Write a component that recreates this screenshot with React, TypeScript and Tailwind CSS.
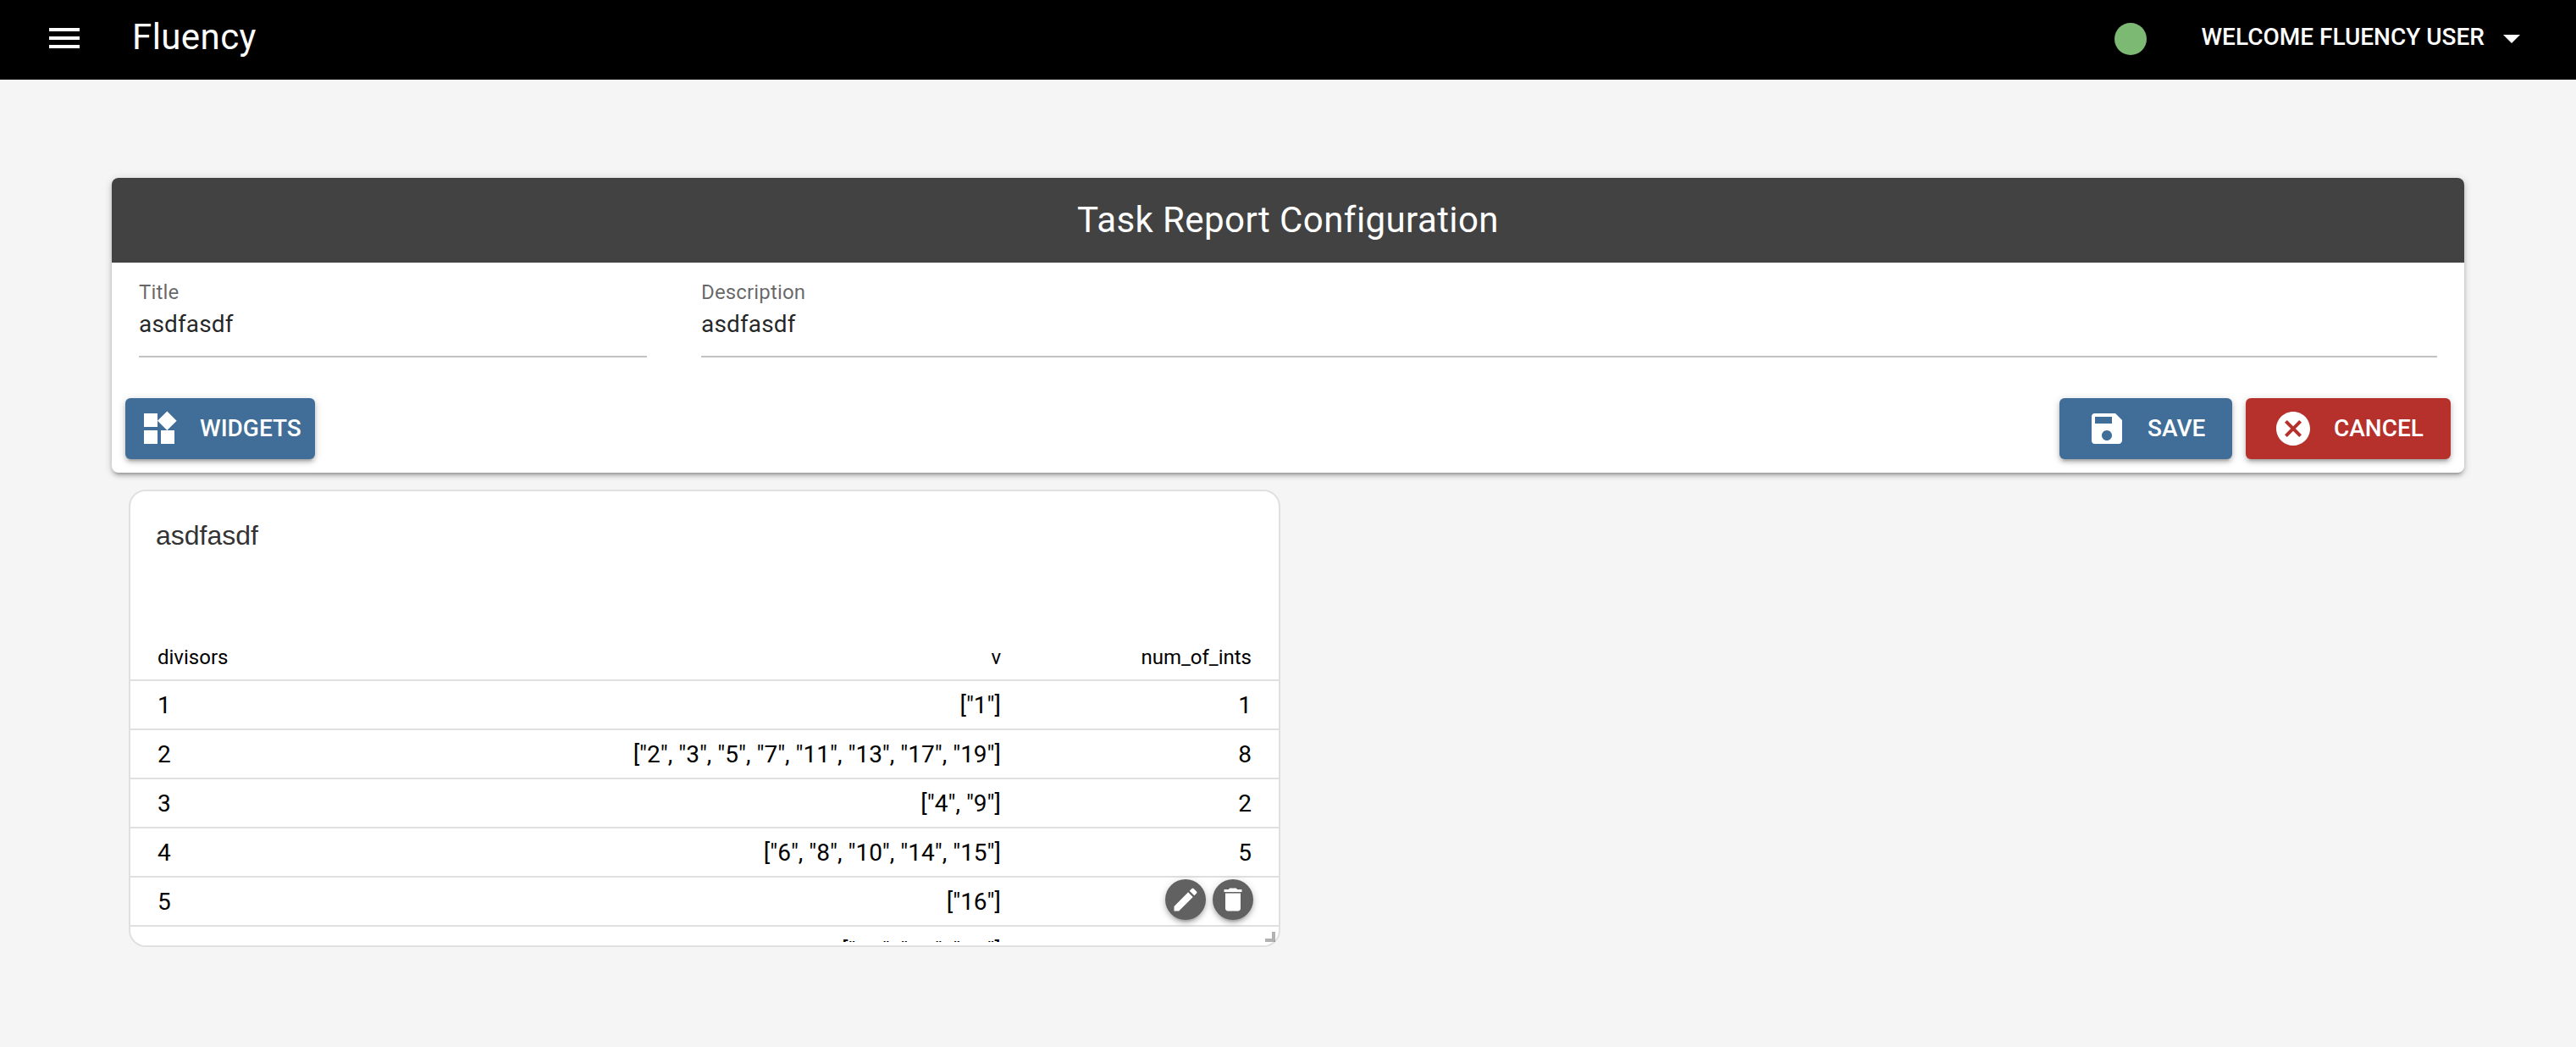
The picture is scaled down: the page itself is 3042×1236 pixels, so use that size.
import type { ReactNode } from "react";
import {
  MdArrowDropDown,
  MdCancel,
  MdDelete,
  MdEdit,
  MdMenu,
  MdSave,
  MdWidgets,
} from "react-icons/md";

const elevation =
  "shadow-[0_2px_10px_rgba(0,0,0,0.2),0_4px_4px_rgba(0,0,0,0.14),0_6px_2px_-4px_rgba(0,0,0,0.12)]";

type DivisorRow = {
  divisors: number;
  values: string[];
  count: number;
};

const rows: DivisorRow[] = [
  { divisors: 1, values: ["1"], count: 1 },
  { divisors: 2, values: ["2", "3", "5", "7", "11", "13", "17", "19"], count: 8 },
  { divisors: 3, values: ["4", "9"], count: 2 },
  { divisors: 4, values: ["6", "8", "10", "14", "15"], count: 5 },
  { divisors: 5, values: ["16"], count: 1 },
  { divisors: 6, values: ["12", "18", "20"], count: 3 },
];

function formatValues(values: string[]) {
  return `[${values.map((value) => `"${value}"`).join(", ")}]`;
}

function AppHeader() {
  return (
    <header className="flex h-[94px] items-center justify-between bg-black pr-[52px] pb-1 pl-[52px] text-white">
      <div className="flex items-center">
        <button type="button" aria-label="Menu">
          <MdMenu className="size-12" />
        </button>
        <span className="ml-14 pb-0.5 text-[42px] leading-none tracking-[0.01em]">
          Fluency
        </span>
      </div>
      <div className="flex items-center">
        <span className="mt-0.5 size-[38px] rounded-full bg-[#7cb973]" />
        <button type="button" className="ml-16 flex items-center">
          <span className="pb-0.5 text-[28px] leading-none font-medium">
            WELCOME FLUENCY USER
          </span>
          <MdArrowDropDown className="ml-2 size-12" />
        </button>
      </div>
    </header>
  );
}

function Field({
  label,
  value,
  className,
}: {
  label: string;
  value: string;
  className: string;
}) {
  return (
    <div
      className={`flex h-28 flex-col border-b-2 border-[#c2c2c2] pt-[23px] tracking-[0.00937em] ${className}`}
    >
      <span className="text-2xl leading-6 text-black/60">{label}</span>
      <span className="mt-3 text-[28px] leading-7 text-black/87">{value}</span>
    </div>
  );
}

function ActionButton({
  icon,
  label,
  className,
}: {
  icon: ReactNode;
  label: string;
  className: string;
}) {
  return (
    <button
      type="button"
      className={`flex h-[72px] items-center rounded-md text-[28px] leading-none font-medium text-white ${elevation} ${className}`}
    >
      {icon}
      <span>{label}</span>
    </button>
  );
}

function ConfigurationCard() {
  return (
    <section className={`h-[348px] rounded-lg bg-white ${elevation}`}>
      <h1 className="flex h-[100px] items-center justify-center rounded-t-lg bg-[#424242] text-[42px] leading-none font-normal tracking-[0.01em] text-white">
        Task Report Configuration
      </h1>
      <div className="flex gap-16 px-8">
        <Field label="Title" value="asdfasdf" className="w-[600px]" />
        <Field label="Description" value="asdfasdf" className="flex-1" />
      </div>
      <div className="mt-12 flex justify-between px-4">
        <ActionButton
          icon={<MdWidgets className="mr-6 size-12" />}
          label="WIDGETS"
          className="w-56 bg-[#406e98] pl-4"
        />
        <div className="flex gap-4">
          <ActionButton
            icon={<MdSave className="mr-6 size-12" />}
            label="SAVE"
            className="w-[204px] bg-[#406e98] pl-8"
          />
          <ActionButton
            icon={<MdCancel className="mr-6 size-12" />}
            label="CANCEL"
            className="w-[242px] bg-[#b7312c] pl-8"
          />
        </div>
      </div>
    </section>
  );
}

function RoundButton({ label, children }: { label: string; children: ReactNode }) {
  return (
    <button
      type="button"
      aria-label={label}
      className={`flex size-12 items-center justify-center rounded-full bg-[#616161] text-white ${elevation}`}
    >
      {children}
    </button>
  );
}

function TableWidget() {
  return (
    <section className="relative mt-5 ml-5 h-[540px] w-[1360px] rounded-[20px] border-2 border-[#e0e0e0] bg-white">
      <div className="h-[532px] overflow-hidden">
        <h2 className="h-[168px] px-[30px] pt-[34px] font-['Liberation_Sans',Arial,sans-serif] text-[32px] leading-9 font-normal text-[#333333]">
          asdfasdf
        </h2>
        <table className="w-full table-fixed border-separate border-spacing-0 text-black">
          <colgroup>
            <col className="w-[400px]" />
            <col />
            <col className="w-[296px]" />
          </colgroup>
          <thead>
            <tr className="h-14 text-2xl leading-6">
              <th className="border-b-2 border-[#e0e0e0] px-8 pt-0.5 pb-0 text-left font-normal">
                divisors
              </th>
              <th className="border-b-2 border-[#e0e0e0] px-8 pt-0.5 pb-0 text-right font-normal">
                v
              </th>
              <th className="border-b-2 border-[#e0e0e0] px-8 pt-0.5 pb-0 text-right font-normal">
                num_of_ints
              </th>
            </tr>
          </thead>
          <tbody>
            {rows.map((row) => (
              <tr key={row.divisors} className="h-[58px] text-[28px] leading-8">
                <td className="border-b-2 border-[#e0e0e0] px-8 pt-0.5 pb-0">
                  {row.divisors}
                </td>
                <td className="border-b-2 border-[#e0e0e0] px-8 pt-0.5 pb-0 text-right whitespace-nowrap">
                  {formatValues(row.values)}
                </td>
                <td className="border-b-2 border-[#e0e0e0] px-8 pt-0.5 pb-0 text-right">
                  {row.count}
                </td>
              </tr>
            ))}
          </tbody>
        </table>
      </div>

      {/* floating edit / delete actions */}
      <div className="absolute right-[30px] bottom-[30px] flex gap-2">
        <RoundButton label="Edit">
          <MdEdit className="size-9" />
        </RoundButton>
        <RoundButton label="Delete">
          <MdDelete className="size-9" />
        </RoundButton>
      </div>

      {/* resize handle */}
      <span className="absolute right-1 bottom-1 size-3 border-r-4 border-b-4 border-black/30" />
    </section>
  );
}

export default function App() {
  return (
    <div className="min-h-screen bg-[#f5f5f5] font-[Roboto,sans-serif]">
      <AppHeader />
      <main className="px-[132px] pt-[116px]">
        <ConfigurationCard />
        <TableWidget />
      </main>
    </div>
  );
}
